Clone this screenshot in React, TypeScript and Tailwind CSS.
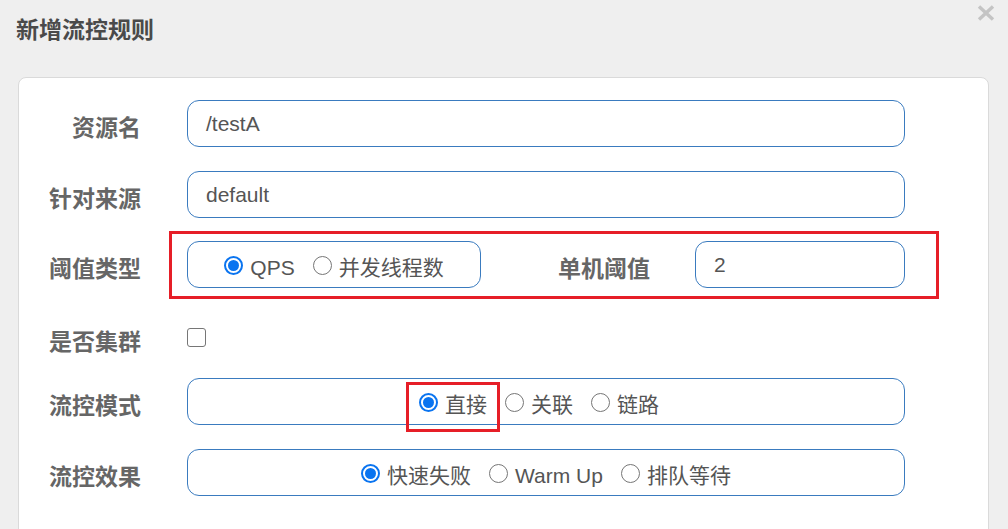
import React from "react";

const cjk = { fontFamily: '"Noto Sans CJK SC", "Noto Sans", sans-serif' };
const mix = { fontFamily: '"Liberation Sans", "Noto Sans CJK SC", Arial, sans-serif' };

function Radio({ checked }: { checked?: boolean }) {
  return checked ? (
    <span className="flex h-[19px] w-[19px] shrink-0 translate-y-[1px] items-center justify-center rounded-full border-2 border-[#0a74f0] bg-white">
      <span className="h-[11px] w-[11px] rounded-full bg-[#0a74f0]" />
    </span>
  ) : (
    <span className="h-[19px] w-[19px] shrink-0 translate-y-[1px] rounded-full border border-[#767676] bg-white" />
  );
}

function RadioItem({ label, checked, first }: { label: string; checked?: boolean; first?: boolean }) {
  return (
    <span className={`flex items-center ${first ? "" : "ml-[18px]"}`}>
      <Radio checked={checked} />
      <span className="ml-[7px] translate-y-[3px] text-[21px] leading-[28px] text-[#555]" style={mix}>
        {label}
      </span>
    </span>
  );
}

function Label({ text, w = "w-[122px]" }: { text: string; w?: string }) {
  return (
    <div
      className={`${w} shrink-0 text-right text-[23px] font-bold leading-[28px] text-[#666] pt-[4px]`}
      style={cjk}
    >
      {text}
    </div>
  );
}

function TextBox({ value, w = "w-[718px]" }: { value: string; w?: string }) {
  return (
    <div
      className={`${w} flex h-[47px] shrink-0 items-center rounded-[12px] border border-[#3a7bbf] bg-white pl-[18px] text-[21px] text-[#555]`}
      style={mix}
    >
      {value}
    </div>
  );
}

export default function App() {
  return (
    <div className="h-[529px] w-[1008px] overflow-hidden bg-[#efefef]">
      <div className="flex h-[77px] items-start justify-between">
        <div
          className="pl-[16px] pt-[12px] text-[23px] font-bold leading-[32px] text-[#4a4a4a]"
          style={cjk}
        >
          新增流控规则
        </div>
        <svg className="mr-[13px] mt-[5px]" width="18" height="16" viewBox="0 0 18 16">
          <path d="M2 1.5 L16 14.5 M16 1.5 L2 14.5" stroke="#c4c4c4" strokeWidth="3.4" fill="none" />
        </svg>
      </div>
      <div className="ml-[18px] w-[971px] rounded-lg border border-[#dadada] bg-white pb-[60px] pt-[22px]">
        {/* 资源名 */}
        <div className="flex h-[47px] items-center">
          <Label text="资源名" />
          <div className="ml-[46px]">
            <TextBox value="/testA" />
          </div>
        </div>
        {/* 针对来源 */}
        <div className="mt-[24px] flex h-[47px] items-center">
          <Label text="针对来源" />
          <div className="ml-[46px]">
            <TextBox value="default" />
          </div>
        </div>
        {/* 阈值类型 */}
        <div className="relative mt-[23px] flex h-[47px] items-center">
          <Label text="阈值类型" />
          <div className="ml-[46px] flex h-[47px] w-[294px] items-center justify-center rounded-[12px] border border-[#3a7bbf] bg-white">
            <RadioItem label="QPS" checked first />
            <RadioItem label="并发线程数" />
          </div>
          <Label text="单机阈值" w="w-[169px]" />
          <div className="ml-[45px]">
            <TextBox value="2" w="w-[210px]" />
          </div>
          <div className="pointer-events-none absolute left-[150px] top-[-10px] h-[68px] w-[770px] border-[3px] border-[#e61e27]" />
        </div>
        {/* 是否集群 */}
        <div className="mt-[26px] flex h-[47px] items-center">
          <Label text="是否集群" />
          <div className="ml-[46px] h-[19px] w-[19px] rounded-[3px] border border-[#767676] bg-white" />
        </div>
        {/* 流控模式 */}
        <div className="relative mt-[17px] flex h-[47px] items-center">
          <Label text="流控模式" />
          <div className="ml-[46px] flex h-[47px] w-[718px] items-center justify-center rounded-[12px] border border-[#3a7bbf] bg-white pr-[14px]">
            <RadioItem label="直接" checked first />
            <RadioItem label="关联" />
            <RadioItem label="链路" />
          </div>
          <div className="pointer-events-none absolute left-[387px] top-[4px] h-[50px] w-[94px] border-[3px] border-[#e61e27]" />
        </div>
        {/* 流控效果 */}
        <div className="mt-[24px] flex h-[47px] items-center">
          <Label text="流控效果" />
          <div className="ml-[46px] flex h-[47px] w-[718px] items-center justify-center rounded-[12px] border border-[#3a7bbf] bg-white">
            <RadioItem label="快速失败" checked first />
            <RadioItem label="Warm Up" />
            <RadioItem label="排队等待" />
          </div>
        </div>
      </div>
    </div>
  );
}
